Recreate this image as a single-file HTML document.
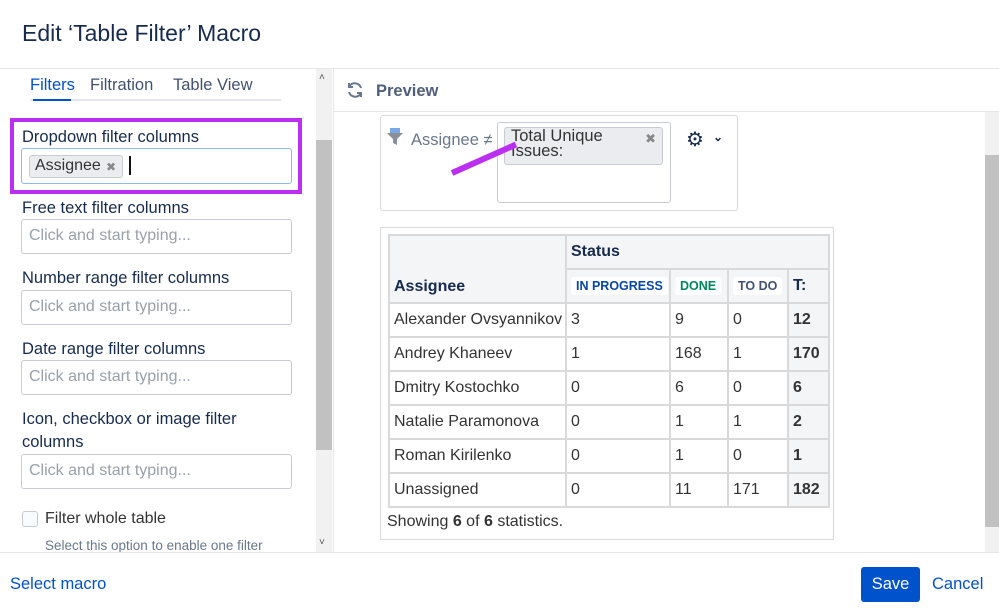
<!DOCTYPE html>
<html><head><meta charset="utf-8"><style>
*{box-sizing:border-box;margin:0;padding:0}
body{width:999px;height:609px;position:relative;overflow:hidden;background:#fff;font-family:"Liberation Sans",sans-serif;color:#172b4d}
.a{position:absolute}
.lbl{position:absolute;left:22px;font-size:16.5px;color:#172b4d}
.inp{position:absolute;left:21px;width:271px;height:35px;border:1px solid #c8ccd2;border-radius:3px;font-size:16px;color:#9aa0a8;padding:7px 7px;white-space:nowrap}
table{border-collapse:collapse;position:absolute;left:388px;top:234px;font-size:16px;table-layout:fixed;width:440px}
td{border:2px solid #d9d9d9;padding:0 4px;height:34px;vertical-align:middle;color:#333;white-space:nowrap;overflow:hidden}
.h{background:#f4f5f7;font-weight:bold;color:#172b4d}
.t{background:#f4f5f7;font-weight:bold;color:#333}
.lz{display:inline-block;background:#fff;border-radius:3px;font-size:12.5px;font-weight:bold;padding:2px 5px}
</style></head><body>
<div class="a" style="left:22px;top:20px;font-size:23px;color:#172b4d">Edit ‘Table Filter’ Macro</div>
<div class="a" style="left:0;top:68px;width:999px;height:1px;background:#e4e6ea"></div>
<div class="a" style="left:30px;top:76px;font-size:16.5px;color:#0052cc">Filters</div>
<div class="a" style="left:90px;top:76px;font-size:16.5px;color:#42526e">Filtration</div>
<div class="a" style="left:173px;top:76px;font-size:16.5px;color:#42526e">Table View</div>
<div class="a" style="left:30px;top:99px;width:251px;height:2px;background:#e4e6ea"></div>
<div class="a" style="left:33px;top:99px;width:38px;height:2px;background:#0052cc"></div>
<div class="a" style="left:10px;top:118px;width:292px;height:76px;border:4px solid #bb2ff3"></div>
<div class="lbl" style="top:128px">Dropdown filter columns</div>
<div class="a" style="left:21px;top:148px;width:271px;height:36px;border:1px solid #8fb8f0;border-radius:3px"></div>
<div class="a" style="left:29px;top:155px;width:94px;height:23px;background:#ebecf0;border:1px solid #c8ccd2;border-radius:3px;font-size:16px;color:#333;padding:1px 5px;white-space:nowrap">Assignee<span class="a" style="right:6px;top:4px;color:#888;font-size:12px">✖</span></div>
<div class="a" style="left:129px;top:156px;width:2px;height:19px;background:#111"></div>
<div class="lbl" style="top:199px">Free text filter columns</div>
<div class="inp" style="top:219px">Click and start typing...</div>
<div class="lbl" style="top:269px">Number range filter columns</div>
<div class="inp" style="top:290px">Click and start typing...</div>
<div class="lbl" style="top:340px">Date range filter columns</div>
<div class="inp" style="top:360px">Click and start typing...</div>
<div class="lbl" style="top:410px">Icon, checkbox or image filter</div>
<div class="lbl" style="top:433px">columns</div>
<div class="inp" style="top:454px">Click and start typing...</div>
<div class="a" style="left:22px;top:511px;width:16px;height:16px;border:1px solid #c8ccd2;border-radius:3px;background:#fafbfc"></div>
<div class="a" style="left:45px;top:510px;font-size:16px;color:#333">Filter whole table</div>
<div class="a" style="left:45px;top:538px;font-size:13.5px;color:#6b778c">Select this option to enable one filter</div>
<div class="a" style="left:316px;top:69px;width:16px;height:483px;background:#f1f1f1"></div>
<div class="a" style="left:316px;top:140px;width:16px;height:310px;background:#c1c1c1"></div>
<div class="a" style="left:319px;top:72px;font-size:10px;color:#555">˄</div>
<div class="a" style="left:319px;top:537px;font-size:10px;color:#555">˅</div>
<div class="a" style="left:333px;top:69px;width:1px;height:483px;background:#e4e6ea"></div>
<svg class="a" style="left:346px;top:81px" width="18" height="18" viewBox="0 0 18 18" fill="none" stroke="#6b778c" stroke-width="2"><path d="M15 7A6.5 6.5 0 0 0 3.5 5"/><path d="M3 2v4h4"/><path d="M3 11a6.5 6.5 0 0 0 11.5 2"/><path d="M15 16v-4h-4"/></svg>
<div class="a" style="left:376px;top:82px;font-size:16.5px;font-weight:bold;color:#505f79">Preview</div>
<div class="a" style="left:334px;top:111px;width:665px;height:1px;background:#e4e6ea"></div>
<div class="a" style="left:985px;top:112px;width:14px;height:440px;background:#f1f1f1"></div>
<div class="a" style="left:985px;top:155px;width:14px;height:372px;background:#c1c1c1"></div>
<div class="a" style="left:380px;top:115px;width:358px;height:96px;border:1px solid #d9d9d9;border-radius:3px"></div>
<svg class="a" style="left:387px;top:128px" width="16" height="18" viewBox="0 0 16 18"><rect x="3" y="0" width="10" height="5" fill="#7aa7e6"/><path d="M0 5h16l-6 6v6l-4-2v-4z" fill="#8a8f98"/></svg>
<div class="a" style="left:411px;top:131px;font-size:16.5px;color:#6b778c">Assignee ≠</div>
<div class="a" style="left:497px;top:122px;width:174px;height:81px;border:1px solid #c8ccd2;border-radius:3px"></div>
<div class="a" style="left:504px;top:127px;width:159px;height:38px;background:#ebecf0;border:1px solid #c8ccd2;border-radius:3px;font-size:16.5px;color:#333;padding:1px 6px;line-height:15px">Total Unique<br>Issues:<span class="a" style="right:6px;top:3px;color:#888;font-size:13px">✖</span></div>
<div class="a" style="left:452px;top:170px;width:70px;height:6px;background:#bb2ff3;transform:rotate(-24deg);transform-origin:0 50%"></div>
<div class="a" style="left:686px;top:127px;font-size:20px;color:#172b4d">⚙</div>
<div class="a" style="left:713px;top:130px;font-size:12px;color:#172b4d;font-weight:bold">⌄</div>
<div class="a" style="left:380px;top:227px;width:454px;height:313px;border:1px solid #d9d9d9"></div>
<table>
<colgroup><col style="width:177px"><col style="width:104px"><col style="width:58px"><col style="width:60px"><col style="width:41px"></colgroup>
<tr><td class="h" rowspan="2" style="vertical-align:bottom;padding-bottom:6px;height:68px">Assignee</td><td class="h" colspan="4" style="height:34px">Status</td></tr>
<tr><td class="h"><span class="lz" style="color:#0747a6">IN PROGRESS</span></td><td class="h"><span class="lz" style="color:#00875a">DONE</span></td><td class="h"><span class="lz" style="color:#42526e">TO DO</span></td><td class="h">T:</td></tr>
<tr><td>Alexander Ovsyannikov</td><td>3</td><td>9</td><td>0</td><td class="t">12</td></tr>
<tr><td>Andrey Khaneev</td><td>1</td><td>168</td><td>1</td><td class="t">170</td></tr>
<tr><td>Dmitry Kostochko</td><td>0</td><td>6</td><td>0</td><td class="t">6</td></tr>
<tr><td>Natalie Paramonova</td><td>0</td><td>1</td><td>1</td><td class="t">2</td></tr>
<tr><td>Roman Kirilenko</td><td>0</td><td>1</td><td>0</td><td class="t">1</td></tr>
<tr><td>Unassigned</td><td>0</td><td>11</td><td>171</td><td class="t">182</td></tr>
</table>
<div class="a" style="left:387px;top:513px;font-size:16px;color:#333">Showing <b>6</b> of <b>6</b> statistics.</div>
<div class="a" style="left:0;top:552px;width:999px;height:1px;background:#e4e6ea"></div>
<div class="a" style="left:10px;top:575px;font-size:16.5px;color:#0052cc">Select macro</div>
<div class="a" style="left:861px;top:567px;width:59px;height:35px;background:#0052cc;border-radius:3px;color:#fff;font-size:16.5px;text-align:center;line-height:35px">Save</div>
<div class="a" style="left:932px;top:575px;font-size:16.5px;color:#0052cc">Cancel</div>
</body></html>
